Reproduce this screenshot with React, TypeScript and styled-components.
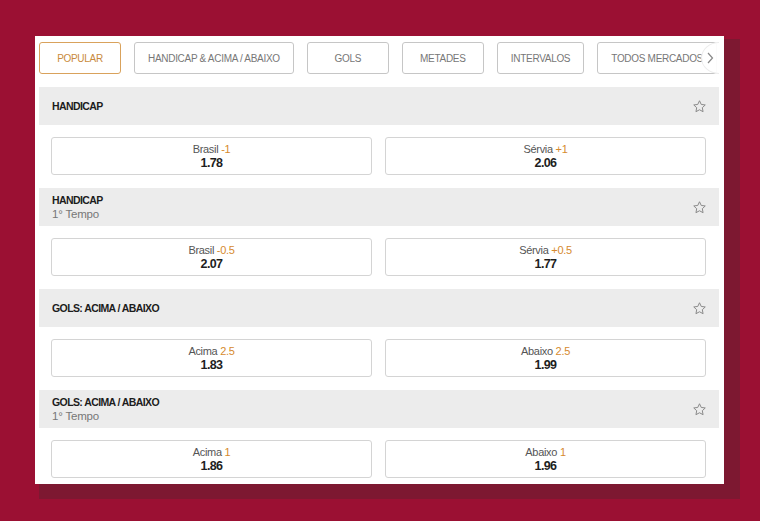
import React from "react";
import styled, { createGlobalStyle } from "styled-components";

interface IOdd {
  label: string;
  line: string;
  price: string;
}

interface IMarket {
  title: string;
  period?: string;
  odds: IOdd[];
}

const tabs = ["POPULAR", "HANDICAP & ACIMA / ABAIXO", "GOLS", "METADES", "INTERVALOS", "TODOS MERCADOS"];

const markets: IMarket[] = [
  {
    title: "HANDICAP",
    odds: [
      { label: "Brasil", line: "-1", price: "1.78" },
      { label: "Sérvia", line: "+1", price: "2.06" },
    ],
  },
  {
    title: "HANDICAP",
    period: "1° Tempo",
    odds: [
      { label: "Brasil", line: "-0.5", price: "2.07" },
      { label: "Sérvia", line: "+0.5", price: "1.77" },
    ],
  },
  {
    title: "GOLS: ACIMA / ABAIXO",
    odds: [
      { label: "Acima", line: "2.5", price: "1.83" },
      { label: "Abaixo", line: "2.5", price: "1.99" },
    ],
  },
  {
    title: "GOLS: ACIMA / ABAIXO",
    period: "1° Tempo",
    odds: [
      { label: "Acima", line: "1", price: "1.86" },
      { label: "Abaixo", line: "1", price: "1.96" },
    ],
  },
];

const GlobalStyle = createGlobalStyle`
  html, body {
    margin: 0;
    padding: 0;
    background: #9b1033;
    font-family: "Liberation Sans", Arial, sans-serif;
  }
`;

function StarIcon() {
  return (
    <svg width="15" height="15" viewBox="0 0 24 24" fill="none" stroke="#8a8a8a" strokeWidth="1.6" strokeLinejoin="round">
      <path d="M12 2.8l2.8 5.9 6.4.8-4.7 4.4 1.2 6.4L12 17.2l-5.7 3.1 1.2-6.4-4.7-4.4 6.4-.8z" />
    </svg>
  );
}

export default function App() {
  return (
    <>
      <GlobalStyle />
      <Page>
        <Panel>
          <TabBar>
            <TabList>
              {tabs.map((tab, index) => (
                <Tab key={tab} active={index === 0}>
                  {tab}
                </Tab>
              ))}
            </TabList>
            <ScrollArrow>
              <svg width="8" height="12" viewBox="0 0 8 12" fill="none" stroke="#888" strokeWidth="1.2">
                <path d="M2 1l4.5 5L2 11" />
              </svg>
            </ScrollArrow>
          </TabBar>
          {markets.map((market, index) => (
            <Market key={index}>
              <MarketHeader>
                <div>
                  <div className="market-title">{market.title}</div>
                  {market.period && <div className="market-period">{market.period}</div>}
                </div>
                <StarIcon />
              </MarketHeader>
              <OddsRow>
                {market.odds.map((odd) => (
                  <OddButton key={odd.label}>
                    <div className="odd-label">
                      {odd.label} <span>{odd.line}</span>
                    </div>
                    <div className="odd-price">{odd.price}</div>
                  </OddButton>
                ))}
              </OddsRow>
            </Market>
          ))}
        </Panel>
      </Page>
    </>
  );
}

const Page = styled.div`
  width: 760px;
  height: 521px;
  padding: 36px 0 0 35px;
  box-sizing: border-box;
`;

const Panel = styled.div`
  width: 689px;
  height: 448px;
  background: #ffffff;
  box-shadow: 10px 9px 0 6px #7d1831;
  padding: 6px 5px 0 4px;
  box-sizing: border-box;
  display: flex;
  flex-direction: column;
  gap: 13px;
`;

const TabBar = styled.div`
  position: relative;
  width: 680px;
  overflow: hidden;
`;

const TabList = styled.div`
  display: flex;
  gap: 13px;
`;

const Tab = styled.div<{ active: boolean }>`
  flex-shrink: 0;
  min-width: 82px;
  height: 32px;
  padding: 0 13px;
  box-sizing: border-box;
  display: flex;
  align-items: center;
  justify-content: center;
  border: 1px solid ${(props) => (props.active ? "#d9a25c" : "#c6c6c6")};
  border-radius: 3px;
  font-size: 10px;
  letter-spacing: -0.3px;
  color: ${(props) => (props.active ? "#c98a3c" : "#777777")};
  white-space: nowrap;
`;

const ScrollArrow = styled.div`
  position: absolute;
  right: -18px;
  top: 0;
  width: 36px;
  height: 32px;
  border-radius: 50%;
  background: rgba(255, 255, 255, 0.92);
  border: 1px solid #ececec;
  box-sizing: border-box;
  display: flex;
  align-items: center;
  padding-left: 4px;
`;

const Market = styled.div`
  display: flex;
  flex-direction: column;
  gap: 12px;
`;

const MarketHeader = styled.div`
  height: 38px;
  background: #ececec;
  display: flex;
  align-items: center;
  justify-content: space-between;
  padding: 0 12px 0 13px;

  .market-title {
    font-size: 10.5px;
    font-weight: bold;
    color: #1c1c1c;
    letter-spacing: -0.6px;
    line-height: 13px;
  }
  .market-period {
    font-size: 11.5px;
    color: #777777;
    letter-spacing: -0.2px;
    line-height: 14px;
  }
`;

const OddsRow = styled.div`
  display: grid;
  grid-template-columns: 321px 321px;
  gap: 13px;
  padding: 0 12px;
`;

const OddButton = styled.div`
  height: 38px;
  box-sizing: border-box;
  border: 1px solid #d4d4d4;
  border-radius: 3px;
  display: flex;
  flex-direction: column;
  align-items: center;
  justify-content: center;

  .odd-label {
    font-size: 11px;
    color: #555555;
    letter-spacing: -0.3px;
    line-height: 13px;
    span {
      color: #d68a2e;
    }
  }
  .odd-price {
    font-size: 12.5px;
    font-weight: bold;
    color: #1e1e1e;
    letter-spacing: -0.6px;
    line-height: 14px;
  }
`;
